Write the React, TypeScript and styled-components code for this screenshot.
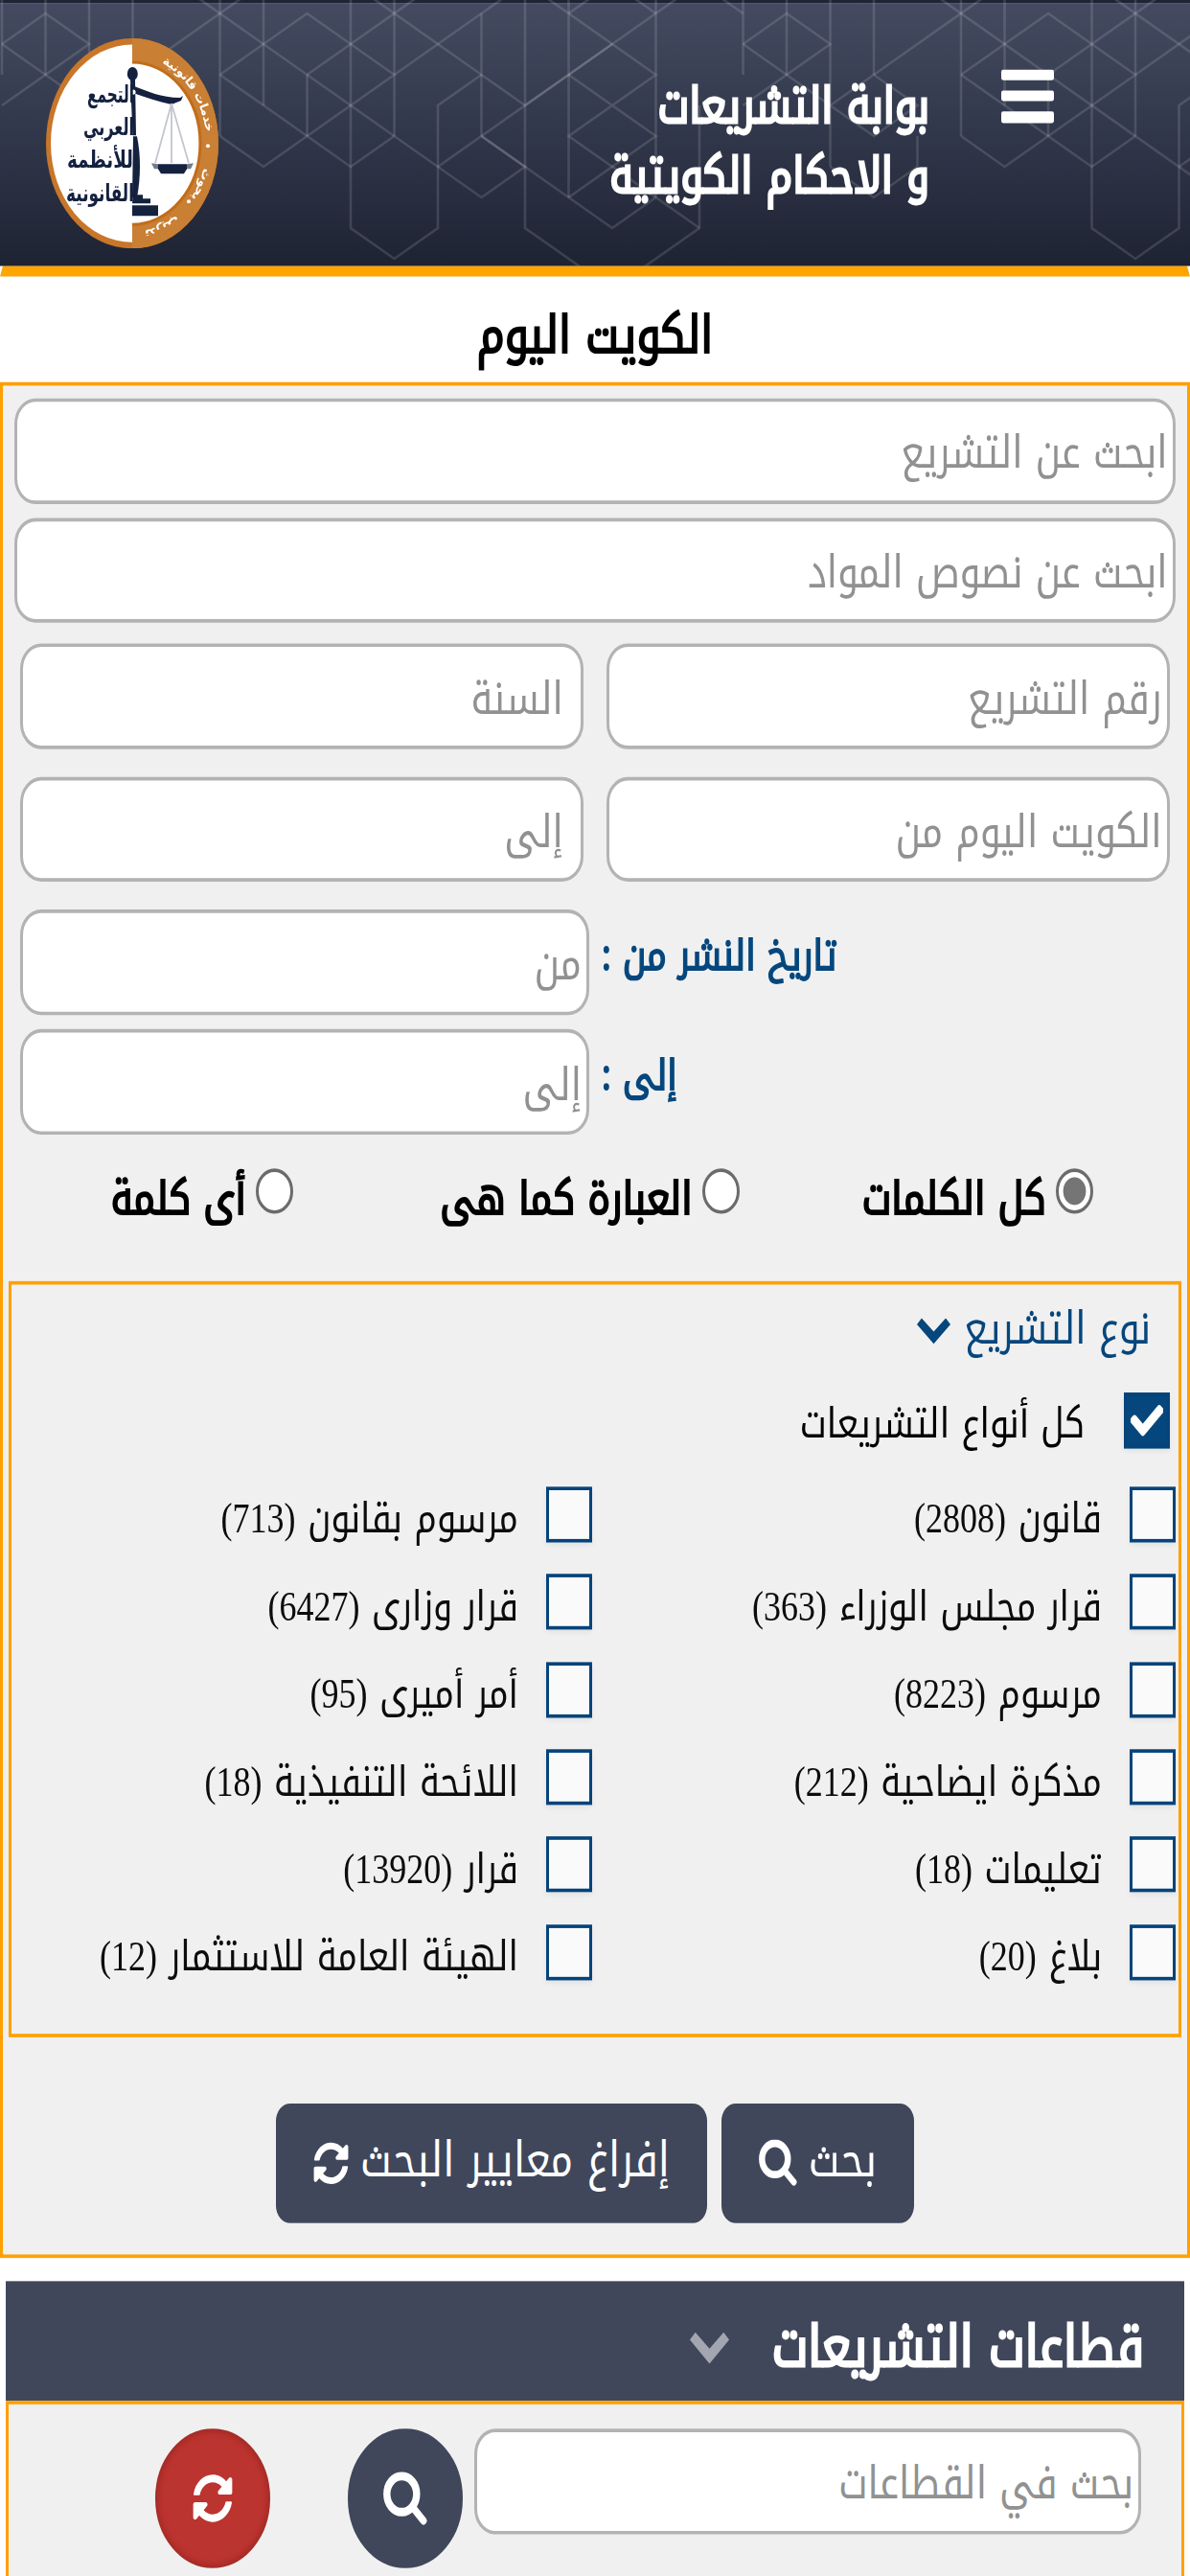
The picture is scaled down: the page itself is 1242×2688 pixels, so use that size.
import React, { useState } from "react";
import styled, { createGlobalStyle } from "styled-components";
import { FaCheck, FaSyncAlt } from "react-icons/fa";

const GlobalStyle = createGlobalStyle`
  * {
    box-sizing: border-box;
  }

  body {
    margin: 0;
    background: #fff;
    font-family: "Noto Kufi Arabic", "DejaVu Sans", sans-serif;
  }
`;

const Frame = styled.div`
  width: 1242px;
  height: 2688px;
  overflow: hidden;
`;

const Page = styled.div`
  display: flex;
  flex-direction: column;
  height: 2218px;
  overflow: hidden;
  direction: rtl;
  transform: scaleY(1.212);
  transform-origin: top;
`;

const Header = styled.header`
  position: relative;
  display: flex;
  align-items: flex-start;
  flex: none;
  height: 228.5px;
  padding: 0 142px 0 48px;
  border-top: 3px solid #1f2435;
  background: linear-gradient(#444b61, #1e2333);
`;

const Pattern = styled.svg`
  position: absolute;
  inset: -3px 0 0 0;
  width: 100%;
  height: 228.5px;
`;

const MenuButton = styled.button`
  position: relative;
  display: flex;
  flex-direction: column;
  gap: 9px;
  width: 55px;
  margin-top: 57px;
  padding: 0;
  border: 0;
  background: none;
`;

const MenuBar = styled.span`
  height: 9.2px;
  border-radius: 2px;
  background: #fff;
`;

const SiteTitle = styled.h1`
  position: relative;
  margin: 59px 75px 0 0;
  color: #fff;
  font-size: 42.2px;
  font-weight: 400;
  line-height: 60.2px;
  white-space: nowrap;
  -webkit-text-stroke: 0.055em #fff;
`;

const LogoLink = styled.a`
  position: relative;
  display: flex;
  margin: 30px auto 0 0;
`;

const HeaderRule = styled.div`
  flex: none;
  border: 0 solid transparent;
  border-width: 0 3px 9px;
  border-bottom-color: #ffa500;
`;

const PageHeading = styled.h2`
  display: flex;
  align-items: center;
  justify-content: center;
  flex: none;
  height: 91.3px;
  margin: 0;
  padding-top: 11.5px;
  color: #000;
  font-size: 44.7px;
  font-weight: 400;
  -webkit-text-stroke: 0.04em #000;
`;

const SearchForm = styled.form`
  display: flex;
  flex-direction: column;
  flex: none;
  height: 1615px;
  padding-top: 11.4px;
  border: 3px solid #ffa000;
  background: #f0f0f0;
`;

const Field = styled.input<{ $inset?: number }>`
  width: 100%;
  min-width: 0;
  height: 90.5px;
  padding: 4px ${(p) => p.$inset ?? 5}px 0 5px;
  border: 3px solid #b3b3b3;
  border-radius: 22px;
  outline: none;
  background: #fff;
  font-family: inherit;
  font-size: 39px;

  &::placeholder {
    color: #919191;
    opacity: 1;
  }
`;

const FieldRow = styled.div<{ $top: number; $wide?: boolean }>`
  display: grid;
  grid-template-columns: ${(p) => (p.$wide ? "1fr" : "1fr 1fr")};
  flex: none;
  gap: 24px;
  margin-top: ${(p) => p.$top}px;
  padding: ${(p) => (p.$wide ? "0 12.5px 0 12px" : "0 18.4px 0 18px")};
`;

const DateRow = styled.div<{ $top: number }>`
  display: flex;
  align-items: center;
  justify-content: flex-end;
  flex: none;
  gap: 13px;
  margin-top: ${(p) => p.$top}px;
  padding-left: 18px;

  ${Field} {
    flex: none;
    width: 594px;
  }
`;

const DateLabel = styled.label`
  padding-bottom: 11px;
  color: #05477d;
  font-size: 36.2px;
  line-height: 1;
  -webkit-text-stroke: 0.04em #05477d;
`;

const MatchOptions = styled.div`
  display: grid;
  grid-template-columns: repeat(3, 1fr);
  align-items: center;
  flex: none;
  height: 53.5px;
  margin: 22.4px 16.5px 0 5.5px;
`;

const MatchOption = styled.label`
  display: flex;
  align-items: center;
  justify-content: center;
  gap: 10px;
`;

const Radio = styled.input`
  flex: none;
  width: 39px;
  height: 39px;
  margin: 0;
  border: 3px solid #6b6b6b;
  border-radius: 50%;
  background: #fff;
  appearance: none;

  &:checked {
    background: radial-gradient(circle, #757575 11.5px, #fff 12.3px);
  }
`;

const MatchText = styled.span`
  padding-top: 13px;
  font-size: 39.3px;
  line-height: 1;
  white-space: nowrap;
  -webkit-text-stroke: 0.045em #000;
`;

const TypesPanel = styled.fieldset`
  flex: none;
  height: 650.2px;
  margin: 50.7px 6px 0;
  padding: 0;
  border: 3px solid #ffa000;
`;

const PanelTitle = styled.div`
  display: flex;
  align-items: center;
  gap: 14px;
  height: 50px;
  margin-top: 11.5px;
  padding: 3px 29px 0 0;
  color: #05477d;
  font-size: 39px;
  line-height: 1;

  svg {
    width: 35px;
    height: 22px;
    margin-top: 3.5px;
  }
`;

const AllTypes = styled.label`
  display: flex;
  align-items: center;
  gap: 41px;
  margin: 31px 9px 0 0;
  font-size: 36px;
  line-height: 1;

  span:last-child {
    padding-top: 6.5px;
  }
`;

const TypeGrid = styled.div`
  display: grid;
  grid-template-columns: 609px 1fr;
  row-gap: 27.4px;
  margin-top: 33px;
  padding-right: 3px;
`;

const TypeItem = styled.label`
  display: flex;
  align-items: center;
  gap: 29px;
  height: 48px;
`;

const CheckBox = styled.span<{ $checked?: boolean }>`
  display: flex;
  align-items: center;
  justify-content: center;
  flex: none;
  width: 48px;
  height: 48px;
  border: 3px solid #05437a;
  background: ${(p) => (p.$checked ? "#05477d" : "#fafafa")};
  box-shadow: 0 3px 5px rgba(0, 0, 0, 0.06);
  color: #fff;
  font-size: 34px;

  svg {
    stroke: #fff;
    stroke-width: 20;
  }
`;

const TypeText = styled.span`
  padding-top: 7px;
  color: #0c0c0c;
  font-family: "Liberation Serif", "Noto Kufi Arabic", serif;
  font-size: 36px;
  line-height: 1;
  white-space: nowrap;
  word-spacing: 3.6px;
`;

const Actions = styled.div`
  display: flex;
  justify-content: center;
  flex: none;
  gap: 14.5px;
  margin-top: 57.3px;
`;

const ActionButton = styled.button<{ $width: number }>`
  display: flex;
  align-items: center;
  justify-content: center;
  gap: 12px;
  width: ${(p) => p.$width}px;
  height: 102.8px;
  padding: 0;
  border: 0;
  border-radius: 15px;
  background: #40475b;
  color: #fff;
  font-family: inherit;
  font-size: 42px;
  line-height: 1;
  white-space: nowrap;
`;

const ButtonText = styled.span`
  padding-bottom: 4.5px;
`;

const Section = styled.section`
  flex: none;
  margin: 20.5px 6px 0;
`;

const SectionHeader = styled.div`
  display: flex;
  align-items: center;
  gap: 45px;
  height: 102.3px;
  padding: 12.5px 42px 0 0;
  background: #40475b;
  color: #fff;
  font-size: 48.4px;
  line-height: 1;
  -webkit-text-stroke: 0.05em #fff;

  svg {
    width: 41px;
    height: 27px;
    color: #a3a6b0;
  }
`;

const SectionBody = styled.div`
  display: flex;
  align-items: flex-start;
  height: 220px;
  padding: 21.5px 42px 0 0;
  border: 3px solid #ffa000;
  background: #f0f0f0;

  ${Field} {
    flex: none;
    width: 696px;
  }
`;

const RoundButton = styled.button<{ $danger?: boolean; $gap: number }>`
  display: flex;
  align-items: center;
  justify-content: center;
  width: 120px;
  height: 120px;
  margin-right: ${(p) => p.$gap}px;
  padding: 0;
  border: 2px solid ${(p) => (p.$danger ? "#a52d28" : "#40475b")};
  border-radius: 50%;
  background: ${(p) => (p.$danger ? "#bc342f" : "#40475b")};
  box-shadow: ${(p) =>
    p.$danger ? "inset 0 0 6px rgba(120, 20, 20, 0.45)" : "none"};
  color: #fff;
`;

const types: Array<[string, number]> = [
  ["قانون", 2808],
  ["مرسوم بقانون", 713],
  ["قرار مجلس الوزراء", 363],
  ["قرار وزارى", 6427],
  ["مرسوم", 8223],
  ["أمر أميرى", 95],
  ["مذكرة ايضاحية", 212],
  ["اللائحة التنفيذية", 18],
  ["تعليمات", 18],
  ["قرار", 13920],
  ["بلاغ", 20],
  ["الهيئة العامة للاستثمار", 12],
];

const matchModes = ["كل الكلمات", "العبارة كما هى", "أى كلمة"];

// [column, row] polylines of the header lattice, repeated every 17 columns
const lattice: Array<Array<[number, number]>> = [
  [[0, -1], [0, 2]],
  [[1, -1], [1, 2]],
  [[2, -1], [2, 5]],
  [[3, -1], [3, 2]],
  [[4, 4], [4, 5]],
  [[5, -1], [5, 4]],
  [[6, -1], [6, 3]],
  [[7, 2], [7, 4]],
  [[8, -1], [8, 7], [9, 8], [10, 7], [10, 3], [11, 2]],
  [[9, -1], [9, 4]],
  [[11, 0], [11, 4]],
  [[12, -1], [12, 7], [13.3, 8.3]],
  [[13, -1], [13, 6]],
  [[15, -1], [15, 6]],
  [[16, 3], [16, 7], [14.7, 8.3]],
  [[0, 1], [1, 0], [2, 1], [0, 3]],
  [[0, 1], [2, 3], [3, 4], [4, 3], [3, 2], [2, 3]],
  [[2, 5], [3, 6], [4, 5]],
  [[4, -1], [11, 6], [12, 5], [11, 4]],
  [[6, -1], [3, 2]],
  [[5, 2], [7, 0], [9, 2], [6, 5], [5, 4]],
  [[5, 2], [8, 5], [9, 4]],
  [[8, -1], [12, 3], [14, 1], [16, -1]],
  [[10, -1], [7, 2]],
  [[12, -1], [9, 2]],
  [[10, 5], [14, 1]],
  [[12, -1], [15, 2], [13, 4], [14, 5], [15, 4], [13, 2]],
  [[14, -1], [13, 0]],
  [[11, 4], [14, 7], [15, 6]],
  [[13, 6], [14, 5], [16, 7]],
  [[14, -1], [15, 0]],
  [[16, -1], [17, 0]],
];

function HeaderPattern() {
  return (
    <Pattern viewBox="0 0 1242 277" preserveAspectRatio="none">
      <g fill="none" stroke="#fff" strokeOpacity="0.13" strokeWidth="2.6">
        {[0, 17].map((shift) =>
          lattice.map((line, i) => (
            <polyline
              key={`${shift}-${i}`}
              points={line
                .map(([c, r]) => `${2 + (c + shift) * 45.5},${14 + r * 32}`)
                .join(" ")}
            />
          ))
        )}
      </g>
    </Pattern>
  );
}

function Logo() {
  return (
    <svg
      width="180"
      height="181"
      viewBox="0 0 180 219"
      preserveAspectRatio="none"
    >
      <ellipse cx="90" cy="109.5" rx="90" ry="109.5" fill="#c8762a" />
      <ellipse cx="90" cy="109.5" rx="85" ry="103" fill="#fff" />
      <path d="M90 0a90 109.5 0 0 1 0 219v-25a71 84.5 0 0 0 0-169z" fill="#c97f34" />
      <path
        d="M90 25a71 84.5 0 0 1 0 169"
        fill="none"
        stroke="#c26c19"
        strokeWidth="3"
      />
      <path id="ring" d="M92 19a75.5 91 0 0 1 0 182" fill="none" />
      <g
        fill="#fff"
        fontFamily="DejaVu Sans"
        fontSize="12.5"
        fontWeight="700"
        direction="ltr"
      >
        <text>
          <textPath href="#ring" startOffset="30">خدمات قانونية</textPath>
        </text>
        <text>
          <textPath href="#ring" startOffset="156">بحوث</textPath>
        </text>
        <text>
          <textPath href="#ring" startOffset="214">تدريب</textPath>
        </text>
      </g>
      <g fill="#fff">
        <circle cx="169" cy="112" r="2" />
        <circle cx="149" cy="170" r="2" />
      </g>
      <g fill="#14213f">
        <ellipse cx="90.3" cy="37" rx="5.5" ry="7" />
        <path d="M88 43h5l1 58h-3.5z" />
        <path d="M91 102h4c4 20 4 42 0 64h-5z" />
        <path d="M91 163h10v4h8v5H90z" />
        <path d="M90 174h27v11H90z" />
        <path d="M92 50c14 5 28 12 48 12l3-2-2 5-10 4c-14-3-28-8-40-12z" />
        <path d="M117 131h30v5l-3 5h-24l-3-5z" />
        <path d="M110 130l7 1v5h-4zM154 130l-7 1v5h4z" opacity="0.6" />
      </g>
      <circle cx="91" cy="56" r="2.6" fill="#fff" />
      <path
        d="M131 68l-17 62M131 68l18 62M131 68v62"
        fill="none"
        stroke="#c3c6cf"
        strokeWidth="1.8"
      />
      <g
        fill="#14213f"
        fontFamily="DejaVu Sans"
        fontSize="25"
        fontWeight="700"
        direction="rtl"
      >
        <text x="92" y="67" textLength="49" lengthAdjust="spacingAndGlyphs">التجمع</text>
        <text x="92" y="101" textLength="53" lengthAdjust="spacingAndGlyphs">العربي</text>
        <text x="91" y="135" textLength="69" lengthAdjust="spacingAndGlyphs">للأنظمة</text>
        <text x="92" y="170" textLength="71" lengthAdjust="spacingAndGlyphs">القانونية</text>
      </g>
    </svg>
  );
}

function Chevron() {
  return (
    <svg viewBox="0 0 100 100" preserveAspectRatio="none">
      <path d="M0 24L14 0 50 52 86 0l14 24-50 76z" fill="currentColor" />
    </svg>
  );
}

function SearchIcon({ size }: { size: number }) {
  return (
    <svg width={size} height={size} viewBox="0 0 46 46" fill="none">
      <g stroke="currentColor">
        <circle cx="19.3" cy="19.3" r="15.5" strokeWidth="7.4" />
        <path d="M31 31l11 11.2" strokeWidth="6.8" strokeLinecap="round" />
      </g>
    </svg>
  );
}

export default function App() {
  const [allTypes, setAllTypes] = useState<boolean>(true);

  return (
    <Frame>
      <GlobalStyle />
      <Page>
        <Header>
          <HeaderPattern />
          <MenuButton type="button" aria-label="القائمة">
            <MenuBar />
            <MenuBar />
            <MenuBar />
          </MenuButton>
          <SiteTitle>
            بوابة التشريعات
            <br />
            و الاحكام الكويتية
          </SiteTitle>
          <LogoLink>
            <Logo />
          </LogoLink>
        </Header>
        <HeaderRule />
        <PageHeading>الكويت اليوم</PageHeading>

        <SearchForm onSubmit={(e) => e.preventDefault()}>
          <FieldRow $top={0} $wide>
            <Field placeholder="ابحث عن التشريع" />
          </FieldRow>
          <FieldRow $top={12.3} $wide>
            <Field placeholder="ابحث عن نصوص المواد" />
          </FieldRow>
          <FieldRow $top={17.8}>
            <Field placeholder="رقم التشريع" />
            <Field placeholder="السنة" $inset={18} />
          </FieldRow>
          <FieldRow $top={23.9}>
            <Field placeholder="الكويت اليوم من" />
            <Field placeholder="إلى" $inset={18} />
          </FieldRow>
          <DateRow $top={24}>
            <DateLabel>تاريخ النشر من :</DateLabel>
            <Field placeholder="من" />
          </DateRow>
          <DateRow $top={12.6}>
            <DateLabel>إلى :</DateLabel>
            <Field placeholder="إلى" />
          </DateRow>

          <MatchOptions>
            {matchModes.map((mode, i) => (
              <MatchOption key={mode}>
                <Radio type="radio" name="match" defaultChecked={i === 0} />
                <MatchText>{mode}</MatchText>
              </MatchOption>
            ))}
          </MatchOptions>

          <TypesPanel>
            <PanelTitle>
              نوع التشريع
              <Chevron />
            </PanelTitle>
            <AllTypes onClick={() => setAllTypes(!allTypes)}>
              <CheckBox $checked={allTypes}>{allTypes && <FaCheck />}</CheckBox>
              <span>كل أنواع التشريعات</span>
            </AllTypes>
            <TypeGrid>
              {types.map(([name, count]) => (
                <TypeItem key={name}>
                  <CheckBox />
                  <TypeText>
                    {name} ({count})
                  </TypeText>
                </TypeItem>
              ))}
            </TypeGrid>
          </TypesPanel>

          <Actions>
            <ActionButton type="submit" $width={201.5}>
              <ButtonText>بحث</ButtonText>
              <SearchIcon size={40} />
            </ActionButton>
            <ActionButton type="reset" $width={450}>
              <ButtonText>إفراغ معايير البحث</ButtonText>
              <FaSyncAlt size={37} />
            </ActionButton>
          </Actions>
        </SearchForm>

        <Section>
          <SectionHeader>
            قطاعات التشريعات
            <Chevron />
          </SectionHeader>
          <SectionBody>
            <Field placeholder="بحث في القطاعات" />
            <RoundButton $gap={12}>
              <SearchIcon size={46} />
            </RoundButton>
            <RoundButton $danger $gap={81}>
              <FaSyncAlt size={42} />
            </RoundButton>
          </SectionBody>
        </Section>
      </Page>
    </Frame>
  );
}
